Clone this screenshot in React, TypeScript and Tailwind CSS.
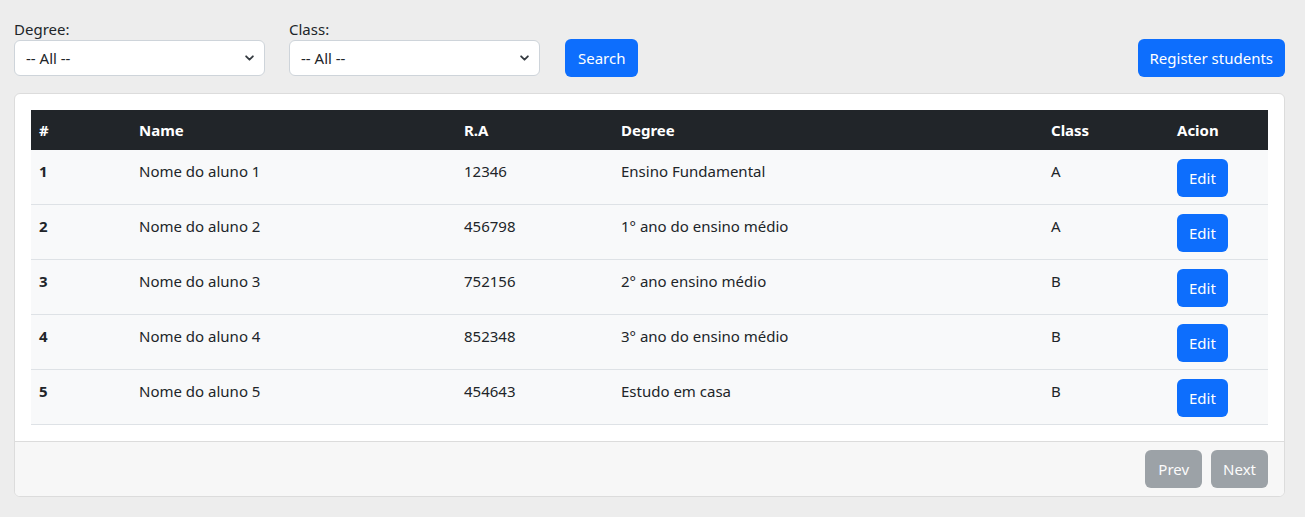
import React from "react";

const rows = [
  { id: 1, name: "Nome do aluno 1", ra: "12346", degree: "Ensino Fundamental", cls: "A" },
  { id: 2, name: "Nome do aluno 2", ra: "456798", degree: "1° ano do ensino médio", cls: "A" },
  { id: 3, name: "Nome do aluno 3", ra: "752156", degree: "2° ano ensino médio", cls: "B" },
  { id: 4, name: "Nome do aluno 4", ra: "852348", degree: "3° ano do ensino médio", cls: "B" },
  { id: 5, name: "Nome do aluno 5", ra: "454643", degree: "Estudo em casa", cls: "B" },
];

function Chevron() {
  return (
    <svg className="pointer-events-none absolute right-[11px] top-1/2 -translate-y-1/2" width="9" height="9" viewBox="0 0 16 16">
      <path d="M2 5l6 6 6-6" fill="none" stroke="#343a40" strokeWidth="3.2" strokeLinecap="round" strokeLinejoin="round" />
    </svg>
  );
}

function Select({ label }: { label: string }) {
  return (
    <div className="flex flex-col w-[251px]">
      <label className="text-[15px] leading-[20px] text-[#212529] mb-[1px]">{label}</label>
      <div className="relative">
        <select className="appearance-none w-full h-[36px] bg-white border border-[#ced4da] rounded-[6px] pl-[11px] pr-[36px] text-[15px] text-[#212529] outline-none">
          <option>-- All --</option>
        </select>
        <Chevron />
      </div>
    </div>
  );
}

export default function App() {
  return (
    <div className="min-h-[517px] bg-[#ededed] pl-[14px] pr-[20px] pt-[19px] text-[#212529] [font-family:'Noto_Sans',sans-serif]">
      <div className="flex items-end">
        <Select label="Degree:" />
        <div className="w-[24px]" />
        <Select label="Class:" />
        <button className="ml-[25px] h-[38px] px-[13px] rounded-[6px] bg-[#0d6efd] text-white text-[15px] mb-[-1px]">Search</button>
        <button className="ml-auto h-[38px] px-[12px] rounded-[6px] bg-[#0d6efd] text-white text-[15px] mb-[-1px]">Register students</button>
      </div>
      <div className="mt-[17px] bg-white border border-[#dcdcdc] rounded-[6px] overflow-hidden">
        <div className="p-[16px]">
          <table className="w-full table-fixed border-collapse text-[15px]">
            <colgroup>
              <col className="w-[100px]" />
              <col className="w-[325px]" />
              <col className="w-[157px]" />
              <col className="w-[430px]" />
              <col className="w-[126px]" />
              <col />
            </colgroup>
            <thead>
              <tr className="bg-[#212529] text-white h-[40px]">
                <th className="text-left font-bold px-[8px]">#</th>
                <th className="text-left font-bold px-[8px]">Name</th>
                <th className="text-left font-bold px-[8px]">R.A</th>
                <th className="text-left font-bold px-[8px]">Degree</th>
                <th className="text-left font-bold px-[8px]">Class</th>
                <th className="text-left font-bold px-[8px]">Acion</th>
              </tr>
            </thead>
            <tbody>
              {rows.map((r) => (
                <tr key={r.id} className="bg-[#f8f9fa] border-b border-[#dee2e6]">
                  <td className="align-top px-[8px] pt-[10px] font-bold">{r.id}</td>
                  <td className="align-top px-[8px] pt-[10px]">{r.name}</td>
                  <td className="align-top px-[8px] pt-[10px]">{r.ra}</td>
                  <td className="align-top px-[8px] pt-[10px]">{r.degree}</td>
                  <td className="align-top px-[8px] pt-[10px]">{r.cls}</td>
                  <td className="align-top px-[8px] pt-[9px] pb-[7px]">
                    <button className="block h-[38px] px-[12px] rounded-[6px] bg-[#0d6efd] text-white text-[15px]">Edit</button>
                  </td>
                </tr>
              ))}
            </tbody>
          </table>
        </div>
        <div className="flex justify-end gap-[9px] border-t border-[#dcdcdc] bg-[#f7f7f7] px-[16px] py-[8px]">
          <button disabled className="h-[38px] px-[13px] rounded-[6px] bg-[#6c757d] opacity-65 text-white text-[15px]">Prev</button>
          <button disabled className="h-[38px] px-[12px] rounded-[6px] bg-[#6c757d] opacity-65 text-white text-[15px]">Next</button>
        </div>
      </div>
    </div>
  );
}
